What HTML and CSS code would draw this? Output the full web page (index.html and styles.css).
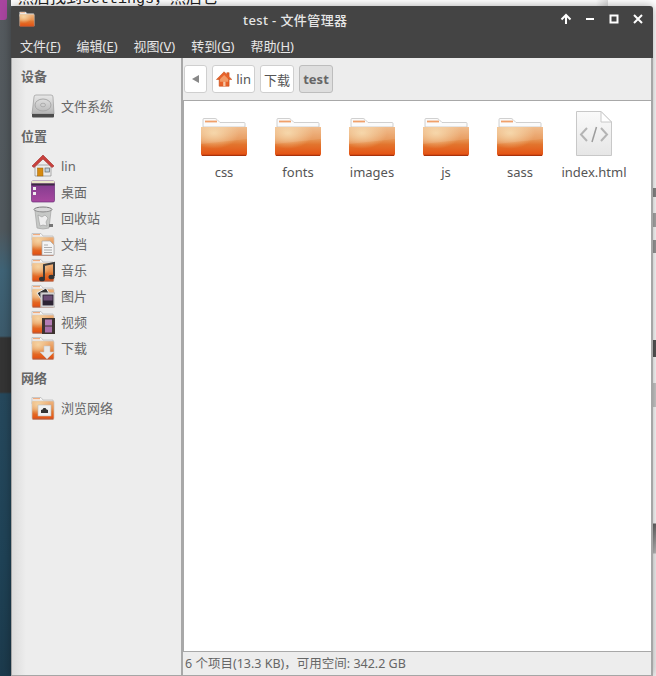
FILE: index.html
```html
<!DOCTYPE html>
<html lang="zh-CN">
<head>
    <meta charset="UTF-8">
    <meta name="viewport" content="width=device-width, initial-scale=1.0">
    <title>test - 文件管理器</title>
    <link rel="stylesheet" href="styles.css">
</head>
<body>
    <svg class="defs" width="0" height="0">
        <defs>
            <linearGradient id="folderFill" x1="0" y1="0" x2="0" y2="1">
                <stop offset="0" stop-color="#efb681"/>
                <stop offset="0.45" stop-color="#e6914f"/>
                <stop offset="0.6" stop-color="#e2752e"/>
                <stop offset="1" stop-color="#e54e10"/>
            </linearGradient>
            <radialGradient id="folderGlow" cx="0.28" cy="0.2" r="0.55">
                <stop offset="0" stop-color="#f6d8a8" stop-opacity="0.9"/>
                <stop offset="1" stop-color="#f6d8a8" stop-opacity="0"/>
            </radialGradient>
            <linearGradient id="paperFill" x1="0" y1="0" x2="0" y2="1">
                <stop offset="0" stop-color="#fafafa"/>
                <stop offset="1" stop-color="#e6e6e6"/>
            </linearGradient>
            <linearGradient id="driveFill" x1="0" y1="0" x2="0" y2="1">
                <stop offset="0" stop-color="#e8e8e8"/>
                <stop offset="1" stop-color="#b4b4b4"/>
            </linearGradient>
            <linearGradient id="purpleFill" x1="0" y1="0" x2="0" y2="1">
                <stop offset="0" stop-color="#7d3a8c"/>
                <stop offset="1" stop-color="#a8489f"/>
            </linearGradient>

            <symbol id="folder" viewBox="0 0 46 38">
                <path d="M2 9V1.500q0-1 1-1h11q1 0 2 1l3 3h24q1 0 1 1V9z" fill="#fbfbfb" stroke="#c4c4c4" stroke-width="0.8"/>
                <rect x="4" y="2.600" width="12" height="1.800" fill="#f0a06a"/>
                <path d="M0 9h46v27q0 2-2 2H2q-2 0-2-2z" fill="url(#folderFill)"/>
                <path d="M0 9h46v27q0 2-2 2H2q-2 0-2-2z" fill="url(#folderGlow)"/>
                <path d="M0 9h46v12L0 26z" fill="#fff" fill-opacity="0.1"/>
                <path d="M1 37.400h44" stroke="#a8320c" stroke-width="1.200"/>
            </symbol>

            <symbol id="smallFolder" viewBox="0 0 24 24">
                <path d="M1 4V1.500h9l2 2.500h10v4H1z" fill="#f6f6f6" stroke="#bdbdbd" stroke-width="0.8"/>
                <rect x="2" y="2.200" width="7" height="1" fill="#ee9a62"/>
                <rect x="1" y="5" width="22" height="18" rx="1" fill="url(#folderFill)" stroke="#c9c2bc" stroke-width="0.7"/>
                <rect x="1" y="5" width="22" height="18" fill="url(#folderGlow)"/>
                <path d="M1.500 23h21" stroke="#b03a10"/>
            </symbol>
        </defs>
    </svg>

    <div class="desktop">
        <div class="purple-tile"></div>
        <div class="back-doc">然后找到<span class="back-code">settings</span>，然后它</div>
        <div class="back-strip"></div>

        <div class="window">
            <header class="header">
                <div class="titlebar">
                    <svg class="title-icon" width="16" height="16"><use href="#smallFolder"/></svg>
                    <span class="title">test - 文件管理器</span>
                    <div class="win-buttons">
                        <svg width="12" height="12" viewBox="0 0 12 12"><path d="M6 11V3M1.500 6.500 6 2l4.500 4.500" fill="none" stroke="#fff" stroke-width="2"/></svg>
                        <svg width="12" height="12" viewBox="0 0 12 12"><path d="M2 6h8" stroke="#fff" stroke-width="2"/></svg>
                        <svg width="12" height="12" viewBox="0 0 12 12"><rect x="2.500" y="2.500" width="7" height="7" fill="none" stroke="#fff" stroke-width="2"/></svg>
                        <svg width="12" height="12" viewBox="0 0 12 12"><path d="M2 2l8 8M10 2l-8 8" stroke="#fff" stroke-width="2"/></svg>
                    </div>
                </div>
                <nav class="menubar">
                    <span>文件(<u>F</u>)</span>
                    <span>编辑(<u>E</u>)</span>
                    <span>视图(<u>V</u>)</span>
                    <span>转到(<u>G</u>)</span>
                    <span>帮助(<u>H</u>)</span>
                </nav>
            </header>

            <div class="body">
                <aside class="sidebar">
                    <h3>设备</h3>
                    <div class="place">
                        <svg class="place-icon" width="24" height="24" viewBox="0 0 24 24">
                            <path d="M3 3q0-2 2-2h15q2 0 2 2l1 17H1z" fill="url(#driveFill)" stroke="#9a9a9a" stroke-width="0.7"/>
                            <ellipse cx="12" cy="11" rx="8" ry="6" fill="none" stroke="#a8a8a8"/>
                            <ellipse cx="12" cy="11" rx="2.500" ry="1.800" fill="#cfcfcf" stroke="#999" stroke-width="0.6"/>
                            <path d="M1 20h22v2.500q0 1-1 1H2q-1 0-1-1z" fill="#4c4c4c"/>
                        </svg>
                        <span>文件系统</span>
                    </div>

                    <h3>位置</h3>
                    <div class="place">
                        <svg class="place-icon" width="24" height="24" viewBox="0 0 24 24">
                            <path d="M4 11h16v11H4z" fill="#ececec" stroke="#8e8e8e" stroke-width="0.7"/>
                            <path d="M1 12 12 1l11 11-2 1.500L12 5l-9 8.500z" fill="#c9403c" stroke="#a83a38" stroke-width="0.7"/>
                            <rect x="6.500" y="14" width="5.500" height="8" fill="#d68a10" stroke="#9a6208" stroke-width="0.5"/>
                            <rect x="14" y="14" width="4.500" height="4" fill="#bcd0dc" stroke="#666" stroke-width="0.7"/>
                        </svg>
                        <span>lin</span>
                    </div>
                    <div class="place">
                        <svg class="place-icon" width="24" height="24" viewBox="0 0 24 24">
                            <rect x="0.500" y="1" width="23" height="21" rx="1.500" fill="url(#purpleFill)" stroke="#6a2f78" stroke-width="0.7"/>
                            <rect x="0.500" y="1" width="23" height="2.500" fill="#e9e6c8"/>
                            <rect x="0.500" y="3.500" width="23" height="2" fill="#3c2a44"/>
                            <rect x="2" y="7" width="3" height="3" fill="#eee"/>
                            <rect x="2" y="12" width="3" height="3" fill="#eee"/>
                        </svg>
                        <span>桌面</span>
                    </div>
                    <div class="place">
                        <svg class="place-icon" width="24" height="24" viewBox="0 0 24 24">
                            <ellipse cx="12" cy="3.500" rx="9" ry="2.500" fill="#d8d8d8" stroke="#7c7c7c"/>
                            <path d="M4 5l2 17q6 2 12 0l2-17q-8 3-16 0z" fill="#c6c8c6" stroke="#a4a4a4" stroke-width="0.7"/>
                            <path d="M7 9l4 2 3-2 3 3-2 4 1 4-4-1-3 1-1-5z" fill="#eeeeee" stroke="#9a9a9a" stroke-width="0.6"/>
                            <rect x="18" y="18" width="4" height="3" fill="#777"/>
                        </svg>
                        <span>回收站</span>
                    </div>
                    <div class="place">
                        <svg class="place-icon" width="24" height="24" viewBox="0 0 24 24">
                            <use href="#smallFolder"/>
                            <path d="M11 9h8l4 4v10H11z" fill="#f4f4f4" stroke="#a8a8a8" stroke-width="0.7"/>
                            <path d="M13 13h4M13 15.500h8M13 18h8M13 20.500h8" stroke="#9a9a9a" stroke-width="0.8"/>
                        </svg>
                        <span>文档</span>
                    </div>
                    <div class="place">
                        <svg class="place-icon" width="24" height="24" viewBox="0 0 24 24">
                            <use href="#smallFolder"/>
                            <path d="M13 20V7l10-2v13" fill="none" stroke="#3c3c3c" stroke-width="2"/>
                            <ellipse cx="11" cy="21" rx="3" ry="2.300" fill="#333"/>
                            <ellipse cx="20.500" cy="19" rx="3" ry="2.300" fill="#333"/>
                        </svg>
                        <span>音乐</span>
                    </div>
                    <div class="place">
                        <svg class="place-icon" width="24" height="24" viewBox="0 0 24 24">
                            <use href="#smallFolder"/>
                            <path d="M6 9l9-5 3 5-8 6z" fill="#333" stroke="#eee"/>
                            <rect x="10.500" y="9.500" width="13" height="13" fill="#2c2434" stroke="#e8e8e8" stroke-width="2"/>
                            <rect x="10" y="9" width="14" height="14" fill="none" stroke="#999" stroke-width="0.6"/>
                            <rect x="12.500" y="11.500" width="9" height="5" fill="#6c4e76"/>
                        </svg>
                        <span>图片</span>
                    </div>
                    <div class="place">
                        <svg class="place-icon" width="24" height="24" viewBox="0 0 24 24">
                            <use href="#smallFolder"/>
                            <rect x="11" y="8" width="13" height="16" fill="#3e3430"/>
                            <rect x="14" y="9.500" width="7" height="6" fill="#b47cb4"/>
                            <rect x="14" y="16.500" width="7" height="6" fill="#a86ea8"/>
                        </svg>
                        <span>视频</span>
                    </div>
                    <div class="place">
                        <svg class="place-icon" width="24" height="24" viewBox="0 0 24 24">
                            <use href="#smallFolder"/>
                            <path d="M13 10h6v6h4l-7 7-7-7h4z" fill="#e8e8e8" stroke="#c8c8c8" stroke-width="0.6"/>
                        </svg>
                        <span>下载</span>
                    </div>

                    <h3>网络</h3>
                    <div class="place">
                        <svg class="place-icon" width="24" height="24" viewBox="0 0 24 24">
                            <use href="#smallFolder"/>
                            <rect x="7" y="9" width="13" height="11" fill="#f0f0f0" stroke="#bbb" stroke-width="0.6"/>
                            <path d="M10 17v-3l1.500-0.500 1-1.500h2l1 1.500L17 14v3z" fill="#333"/>
                        </svg>
                        <span>浏览网络</span>
                    </div>
                </aside>

                <main class="main">
                    <div class="pathbar">
                        <button class="crumb crumb-back" type="button">
                            <svg width="10" height="10" viewBox="0 0 10 10"><path d="M8 1v8L1 5z" fill="#888"/></svg>
                        </button>
                        <button class="crumb crumb-home" type="button">
                            <svg width="18" height="18" viewBox="0 0 18 18"><path d="M3.500 9v8h11V9zM0.500 9.500 9 1l3 3V2h2.500v4.500l3 3z" fill="#e8622a" stroke="#c24a14" stroke-width="0.6"/><path d="M4.500 9 9 4.500 13.500 9v3h-9z" fill="#f29a66"/><rect x="8" y="12" width="2.500" height="5" fill="#f6c9a8"/></svg>
                            <span>lin</span>
                        </button>
                        <button class="crumb" type="button">下载</button>
                        <button class="crumb crumb-active" type="button">test</button>
                    </div>

                    <div class="files">
                        <div class="file">
                            <svg class="file-icon" width="46" height="38"><use href="#folder"/></svg>
                            <span>css</span>
                        </div>
                        <div class="file">
                            <svg class="file-icon" width="46" height="38"><use href="#folder"/></svg>
                            <span>fonts</span>
                        </div>
                        <div class="file">
                            <svg class="file-icon" width="46" height="38"><use href="#folder"/></svg>
                            <span>images</span>
                        </div>
                        <div class="file">
                            <svg class="file-icon" width="46" height="38"><use href="#folder"/></svg>
                            <span>js</span>
                        </div>
                        <div class="file">
                            <svg class="file-icon" width="46" height="38"><use href="#folder"/></svg>
                            <span>sass</span>
                        </div>
                        <div class="file">
                            <svg class="file-icon file-icon-doc" width="36" height="45" viewBox="0 0 36 45">
                                <path d="M0.500 0.500H25L35.500 11v33.500H0.500z" fill="url(#paperFill)" stroke="#c8c8c8"/>
                                <path d="M25 0.500V11h10.500z" fill="#fff" stroke="#c8c8c8"/>
                                <path d="M11 17l-6 6.500 6 6.500M25 17l6 6.500-6 6.500" fill="none" stroke="#b4b4b4" stroke-width="2"/>
                                <path d="M20.500 16l-4.500 15" fill="none" stroke="#9c9c9c" stroke-width="1.500"/>
                            </svg>
                            <span>index.html</span>
                        </div>
                    </div>

                    <footer class="status">6 个项目(13.3 KB)，可用空间: 342.2 GB</footer>
                </main>
            </div>
        </div>
    </div>
</body>
</html>
```

FILE: styles.css
```css
* {
    box-sizing: border-box;
}
body {
    margin: 0;
    font-family: "Noto Sans", "Noto Sans CJK SC", sans-serif;
    font-size: 13px;
}
.defs {
    position: absolute;
}
.desktop {
    position: relative;
    width: 656px;
    height: 676px;
    overflow: hidden;
    background: linear-gradient(to bottom,
        #555a5e 0, #50585d 230px, #3f6376 270px, #3c5a6b 336px,
        #343434 338px, #343434 392px,
        #26485c 394px, #1f4256 560px, #1c3a4c 676px);
}
.purple-tile {
    position: absolute;
    left: -8px;
    top: -6px;
    width: 15px;
    height: 26px;
    background: #a8459f;
    border-radius: 3px;
}
.back-doc {
    position: absolute;
    left: 11px;
    top: -14px;
    width: 597px;
    height: 20px;
    background: linear-gradient(to right, #fff 0, #fff 585px, #dcdcdc 597px);
    color: #222;
    font-size: 16px;
    line-height: 22px;
    padding-left: 7px;
    overflow: hidden;
}
.back-code {
    font-family: "Liberation Mono", monospace;
    font-size: 15px;
}
.back-strip {
    position: absolute;
    left: 608px;
    top: 0;
    width: 48px;
    height: 676px;
    background: linear-gradient(to bottom,
        #fff 0, #fff 188px, #888 188px, #888 197px, #fff 197px,
        #fff 213px, #aaa 213px, #aaa 227px, #fff 227px,
        #fff 240px, #999 240px, #999 253px, #fff 253px,
        #fff 340px, #555 340px, #555 357px, #fff 357px,
        #fff 383px, #ccc 383px, #ccc 407px, #fff 407px,
        #fff 523px, #666 524px, #bbb 553px, #f4f4f4 554px);
}
.window {
    position: absolute;
    left: 11px;
    top: 6px;
    width: 642px;
    height: 670px;
    display: flex;
    flex-direction: column;
    border-radius: 3px 3px 0 0;
    box-shadow: 0 0 10px rgba(0, 0, 0, 0.35);
}
.header {
    background-color: #444444;
    color: #e6e6e6;
    border-radius: 3px 3px 0 0;
}
.titlebar {
    position: relative;
    height: 26px;
    display: flex;
    align-items: center;
    padding-left: 232px;
}
.title-icon {
    position: absolute;
    left: 8px;
    top: 5px;
}
.title {
    font-size: 13px;
    font-weight: 500;
    letter-spacing: 0.4px;
}
.win-buttons {
    position: absolute;
    right: 9px;
    top: 7px;
    display: flex;
    gap: 12px;
}
.menubar {
    height: 26px;
    display: flex;
    align-items: center;
    gap: 16px;
    padding-left: 9px;
    font-size: 13px;
}
.body {
    flex: 1;
    display: flex;
    min-height: 0;
    background-color: #ededed;
    border: 1px solid #a6a6a6;
    border-width: 0 2px 1px 1px;
}
.sidebar {
    width: 169px;
    padding-top: 5px;
    color: #666;
    background: linear-gradient(to right, #dcdcdc 0, #ededed 14px);
}
.sidebar h3 {
    margin: 0 0 4px;
    padding-left: 9px;
    height: 26px;
    line-height: 26px;
    font-size: 13px;
    font-weight: 700;
}
.place {
    height: 26px;
    display: flex;
    align-items: center;
    gap: 6px;
    padding-left: 19px;
    line-height: 26px;
}
.place + h3 {
    margin-top: 4px;
}
.place-icon {
    flex: none;
}
.main {
    flex: 1;
    min-width: 0;
    display: flex;
    flex-direction: column;
    border-left: 2px solid #a8a8a8;
}
.pathbar {
    height: 42px;
    flex: none;
    display: flex;
    align-items: center;
    gap: 5px;
    padding-left: 1px;
}
.crumb {
    height: 28px;
    display: flex;
    align-items: center;
    gap: 4px;
    padding: 0 3px;
    background-color: #ffffff;
    border: 1px solid #cfcfcf;
    border-radius: 3px;
    color: #555;
    font: inherit;
    font-size: 13px;
}
.crumb-back {
    width: 23px;
    justify-content: center;
}
.crumb-home {
    width: 43px;
}
.crumb-active {
    background-color: #dedede;
    border-color: #bdbdbd;
    font-weight: 700;
    color: #666;
    width: 34px;
    justify-content: center;
}
.files {
    flex: 1;
    display: grid;
    grid-template-columns: repeat(6, 74px);
    align-content: start;
    padding: 10px 0 0 3px;
    background-color: #ffffff;
    border-top: 1px solid #a8a8a8;
    border-left: 1px solid #a8a8a8;
    border-bottom: 1px solid #a8a8a8;
}
.file {
    display: flex;
    flex-direction: column;
    align-items: center;
    color: #555;
    font-size: 13px;
}
.file-icon {
    margin-top: 7px;
    margin-bottom: 7px;
}
.file-icon-doc {
    margin-top: 0;
}
.status {
    height: 23px;
    flex: none;
    line-height: 24px;
    padding-left: 2px;
    font-size: 12.5px;
    color: #666;
}
```
